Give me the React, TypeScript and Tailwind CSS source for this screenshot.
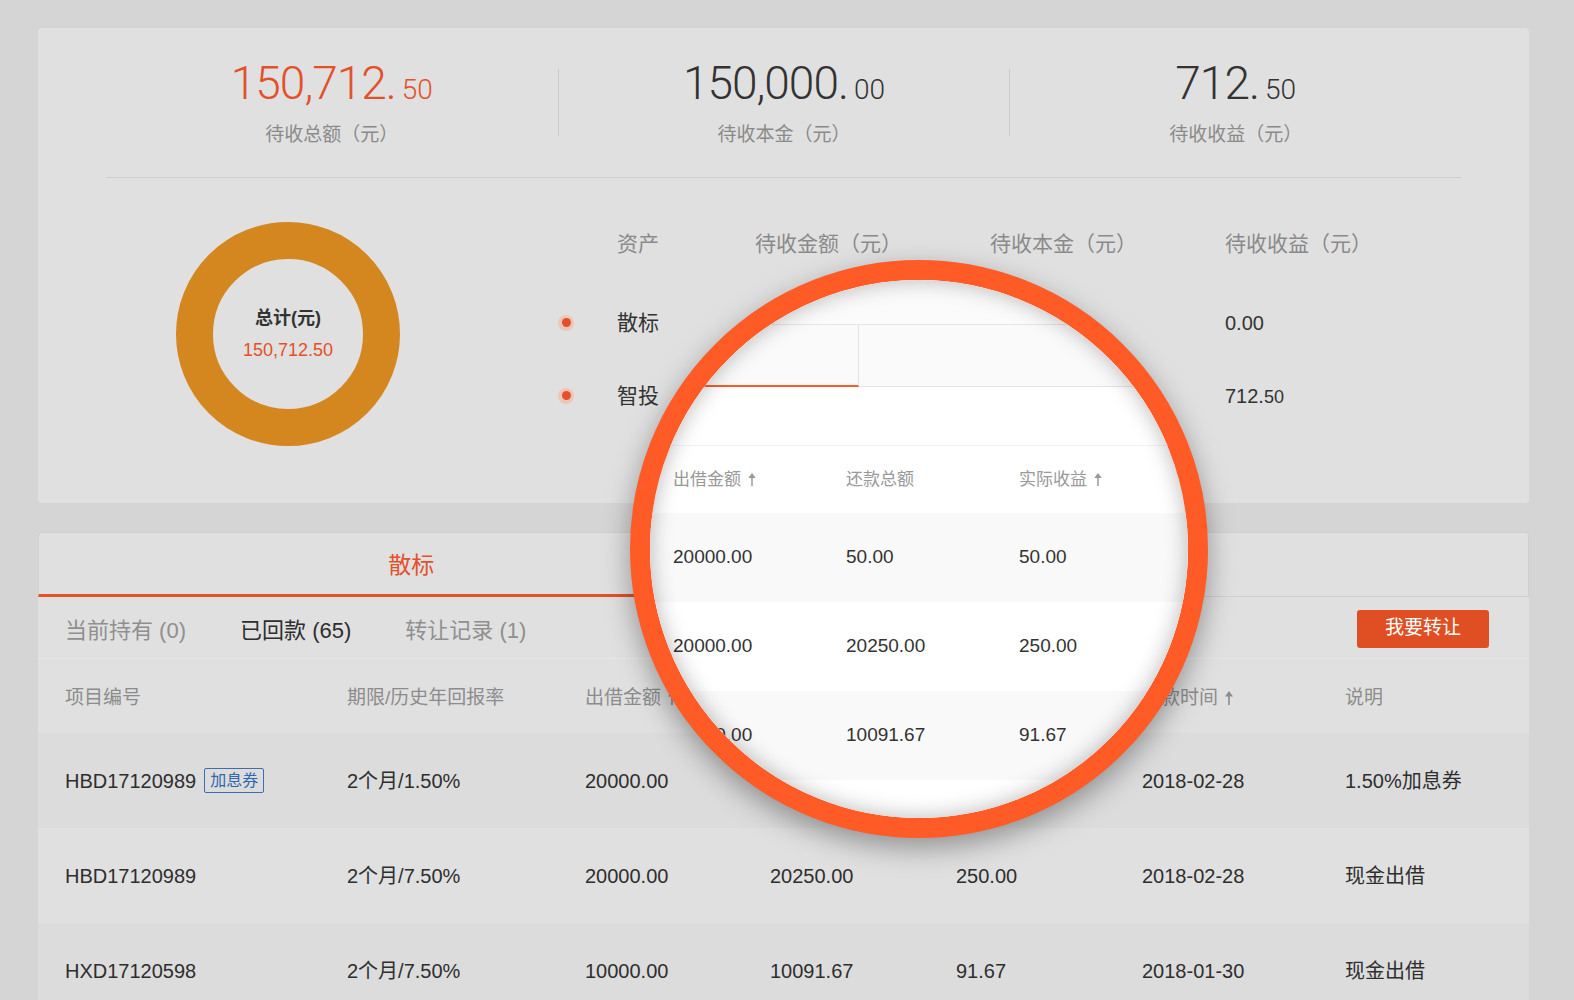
import React from "react";

const F = "font-['Liberation_Sans','Noto_Sans_CJK_SC',sans-serif]";
const NUM = "font-['Roboto','Liberation_Sans',sans-serif]";

function Arrow({ h = 14 }: { h?: number }) {
  return (
    <svg width="10" height={h} viewBox="0 0 10 14" className="inline-block ml-[6px] align-[-1px]" fill="currentColor">
      <rect x="4.2" y="4" width="1.6" height="10" />
      <path d="M5 0 L9 5.5 L1 5.5 Z" />
    </svg>
  );
}

function Stat({ main, dec, label, color, divider }: { main: string; dec: string; label: string; color: string; divider?: boolean }) {
  return (
    <div className={`h-[67px] flex flex-col items-center justify-center ${divider ? "border-l border-[#cbcbcb]" : ""}`}>
      <div className={`flex items-baseline leading-[50px] ${NUM} ${color}`}>
        <span className="text-[46px] font-light tracking-[-1px]">{main}</span>
        <span className="text-[28px] font-light ml-[6px]">{dec}</span>
      </div>
      <div className="mt-[8px] text-[19px] leading-[24px] text-[#8a8a8a]">{label}</div>
    </div>
  );
}

function Dot() {
  return (
    <div className="w-[16px] h-[16px] rounded-full bg-[#ebc6b9] flex items-center justify-center">
      <div className="w-[9px] h-[9px] rounded-full bg-[#e5502a]" />
    </div>
  );
}

const cols = "grid grid-cols-[282px_238px_185px_186px_186px_203px_1fr] pl-[27px] items-center";

const rows = [
  { id: "HBD17120989", badge: true, term: "2个月/1.50%", amt: "20000.00", total: "50.00", gain: "50.00", date: "2018-02-28", note: "1.50%加息券", bg: "bg-[#dcdcdc]" },
  { id: "HBD17120989", badge: false, term: "2个月/7.50%", amt: "20000.00", total: "20250.00", gain: "250.00", date: "2018-02-28", note: "现金出借", bg: "bg-[#e0e0e0]" },
  { id: "HXD17120598", badge: false, term: "2个月/7.50%", amt: "10000.00", total: "10091.67", gain: "91.67", date: "2018-01-30", note: "现金出借", bg: "bg-[#dcdcdc]" },
];

const magRows = [
  { a: "20000.00", b: "50.00", c: "50.00", bg: "bg-[#f9f9f9]" },
  { a: "20000.00", b: "20250.00", c: "250.00", bg: "bg-white" },
  { a: "10000.00", b: "10091.67", c: "91.67", bg: "bg-[#f9f9f9]" },
  { a: "", b: "", c: "", bg: "bg-white" },
];

export default function App() {
  return (
    <div className={`relative w-[1574px] h-[1000px] overflow-hidden bg-[#d5d5d5] pt-[28px] ${F}`}>
      {/* Top card */}
      <div className="ml-[38px] w-[1491px] h-[475px] rounded-[4px] bg-[#e0e0e0] pt-[41px] px-[68px]">
        <div className="grid grid-cols-3">
          <Stat main="150,712." dec="50" label="待收总额（元）" color="text-[#e2512a]" />
          <Stat main="150,000." dec="00" label="待收本金（元）" color="text-[#333333]" divider />
          <Stat main="712." dec="50" label="待收收益（元）" color="text-[#333333]" divider />
        </div>
        <div className="mt-[41px] h-px bg-[#cdcdcd]" />
        <div className="flex items-start">
          <div className="ml-[70px] mt-[44px] w-[224px] h-[224px] rounded-full border-[37px] border-[#d4861f] flex flex-col items-center justify-center">
            <div className="text-[18px] leading-[24px] font-bold text-[#333]">总计(元)</div>
            <div className="mt-[8px] text-[18px] leading-[24px] text-[#e2512a]">150,712.50</div>
          </div>
          <div className="ml-[158px] mt-[46px] flex-1">
            <div className="grid grid-cols-[59px_138px_235px_235px_1fr] h-[40px] items-center text-[21px] text-[#8a8a8a] mb-[22px]">
              <div />
              <div>资产</div>
              <div>待收金额（元）</div>
              <div>待收本金（元）</div>
              <div>待收收益（元）</div>
            </div>
            <div className="grid grid-cols-[59px_138px_235px_235px_1fr] h-[73px] items-center text-[21px] text-[#333]">
              <Dot />
              <div>散标</div>
              <div>0.00</div>
              <div>0.00</div>
              <div className="text-[20px]">0.00</div>
            </div>
            <div className="grid grid-cols-[59px_138px_235px_235px_1fr] h-[73px] items-center text-[21px] text-[#333]">
              <Dot />
              <div>智投</div>
              <div>150,712.50</div>
              <div>150,000.00</div>
              <div className="text-[20px]">712.<span className="text-[18px]">50</span></div>
            </div>
          </div>
        </div>
      </div>

      {/* Second card */}
      <div className="mt-[29px] ml-[38px] w-[1491px] bg-[#e0e0e0] rounded-t-[4px]">
        <div className="flex h-[65px]">
          <div className="flex-1 flex items-center justify-center pt-[4px] border-l border-t border-[#d0d0d0] rounded-tl-[4px] border-b-[3px] border-b-[#e2512a] text-[23px] text-[#e2512a]">散标</div>
          <div className="flex-1 flex items-center justify-center pt-[4px] border-r border-t border-[#d0d0d0] rounded-tr-[4px] border-b border-b-[#cfcfcf] text-[23px] text-[#8a8a8a]">智投</div>
        </div>
        <div className="h-[62px] flex items-center pl-[27px] pr-[40px] pt-[6px] border-b border-[#e6e6e6]">
          <div className="flex items-center gap-[54px] text-[22px]">
            <span className="text-[#8f8f8f]">当前持有 (0)</span>
            <span className="text-[#2e2e2e]">已回款 (65)</span>
            <span className="text-[#8f8f8f]">转让记录 (1)</span>
          </div>
          <button className="ml-auto w-[132px] h-[38px] rounded-[3px] bg-[#e04f24] text-white text-[19px] -mt-[4px]">我要转让</button>
        </div>
        <div className={`${cols} h-[74px] pt-[4px] text-[19px] text-[#8c8c8c]`}>
          <div>项目编号</div>
          <div>期限/历史年回报率</div>
          <div className="flex items-center">出借金额<Arrow /></div>
          <div>还款总额</div>
          <div className="flex items-center">实际收益<Arrow /></div>
          <div className="flex items-center">回款时间<Arrow /></div>
          <div>说明</div>
        </div>
        {rows.map((r, i) => (
          <div key={i} className={`${cols} h-[95px] text-[20px] text-[#2e2e2e] ${r.bg}`}>
            <div className="flex items-center">
              <span>{r.id}</span>
              {r.badge && (
                <span className="ml-[8px] px-[5px] h-[25px] leading-[23px] border border-[#3c6eb0] rounded-[2px] text-[16px] text-[#2f68b0]">加息券</span>
              )}
            </div>
            <div>{r.term}</div>
            <div>{r.amt}</div>
            <div>{r.total}</div>
            <div>{r.gain}</div>
            <div>{r.date}</div>
            <div>{r.note}</div>
          </div>
        ))}
      </div>

      {/* Magnifier */}
      <div className="absolute left-[630px] top-[260px] w-[578px] h-[578px] rounded-full border-[20px] border-[#ff5b27] bg-white overflow-hidden shadow-[0_10px_28px_rgba(0,0,0,0.35)]">
        <div className="w-[538px]">
          <div className="h-[45px] bg-[#fbfbfb] border-b border-[#e6e6e6]" />
          <div className="flex h-[62px]">
            <div className="w-[209px] bg-[#fafafa] border-r border-[#e3e3e3] border-b-2 border-b-[#ff5b27]" />
            <div className="flex-1 bg-[#fafafa] border-b border-[#e3e3e3]" />
          </div>
          <div className="h-[59px] bg-white border-b border-[#f3f3f3]" />
          <div className="grid grid-cols-[173px_173px_173px] pl-[23px] h-[67px] items-center text-[17px] text-[#999]">
            <div className="flex items-center">出借金额<Arrow h={13} /></div>
            <div>还款总额</div>
            <div className="flex items-center">实际收益<Arrow h={13} /></div>
          </div>
          {magRows.map((m, i) => (
            <div key={i} className={`grid grid-cols-[173px_173px_173px] pl-[23px] h-[89px] items-center text-[19px] text-[#333] ${m.bg}`}>
              <div>{m.a}</div>
              <div>{m.b}</div>
              <div>{m.c}</div>
            </div>
          ))}
        </div>
        <div className="absolute inset-0 rounded-full pointer-events-none shadow-[inset_0_0_22px_rgba(0,0,0,0.28)]" />
      </div>
    </div>
  );
}
